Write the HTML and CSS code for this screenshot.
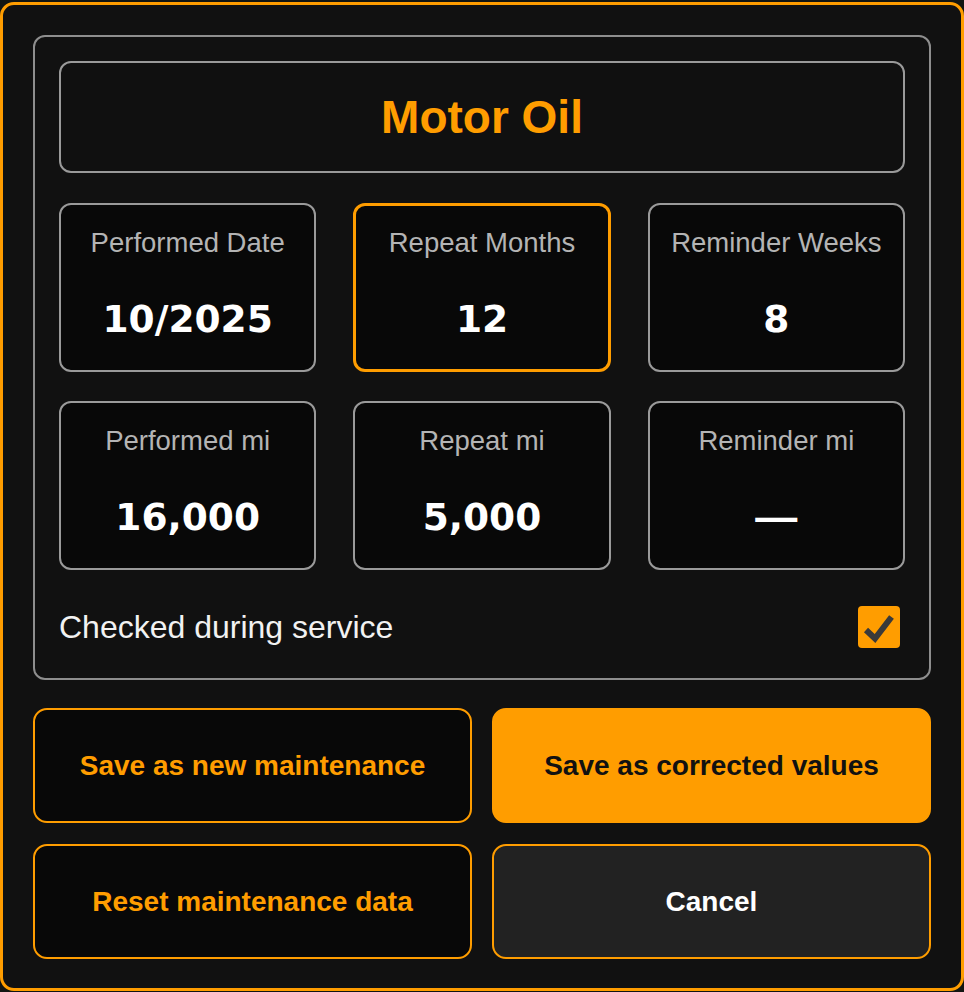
FILE: index.html
```html
<!DOCTYPE html>
<html lang="en">
<head>
<meta charset="utf-8">
<title>Motor Oil</title>
<link rel="stylesheet" href="styles.css">
</head>
<body>
<div class="modal">
  <section class="panel">
    <div class="title-box"><h1 class="title">Motor Oil</h1></div>
    <div class="grid">
      <div class="card"><div class="label">Performed Date</div><div class="value">10/2025</div></div>
      <div class="card active"><div class="label">Repeat Months</div><div class="value">12</div></div>
      <div class="card"><div class="label">Reminder Weeks</div><div class="value">8</div></div>
      <div class="card"><div class="label">Performed mi</div><div class="value">16,000</div></div>
      <div class="card"><div class="label">Repeat mi</div><div class="value">5,000</div></div>
      <div class="card"><div class="label">Reminder mi</div><div class="value value-empty">—</div></div>
    </div>
    <div class="check-row">
      <span class="check-label">Checked during service</span>
      <svg class="checkbox" width="42" height="42" viewBox="0 0 42 42" aria-hidden="true">
        <rect x="0" y="0" width="42" height="42" rx="4" fill="#ff9d00"/>
        <polyline points="8,24 17,32.5 33.5,11" fill="none" stroke="#3a3a3a" stroke-width="6" stroke-linejoin="miter"/>
      </svg>
    </div>
  </section>
  <div class="actions">
    <button class="btn btn-outline">Save as new maintenance</button>
    <button class="btn btn-primary">Save as corrected values</button>
    <button class="btn btn-outline">Reset maintenance data</button>
    <button class="btn btn-cancel">Cancel</button>
  </div>
</div>
</body>
</html>
```

FILE: styles.css
```css
* { box-sizing: border-box; }

html, body {
  margin: 0;
  padding: 0;
  background: #121512;
}

body {
  padding-top: 2px;
  font-family: "Liberation Sans", Arial, sans-serif;
}

.modal {
  width: 964px;
  height: 989px;
  border: 3px solid #ff9d00;
  border-radius: 14px;
  background: #111111;
  padding: 30px 30px 29px;
  display: flex;
  flex-direction: column;
  gap: 28px;
}

.panel {
  border: 2px solid #8e8e8e;
  border-radius: 12px;
  padding: 24px;
  display: flex;
  flex-direction: column;
  gap: 30px;
}

.title-box {
  height: 112px;
  border: 2px solid #9a9a9a;
  border-radius: 12px;
  background: #101010;
  display: flex;
  align-items: center;
  justify-content: center;
}

.title {
  margin: 0;
  color: #ff9d00;
  font-size: 46px;
  font-weight: 700;
  line-height: 1;
}

.grid {
  display: grid;
  grid-template-columns: repeat(3, 1fr);
  grid-auto-rows: 169px;
  column-gap: 37px;
  row-gap: 29px;
}

.card {
  border: 2px solid #9a9a9a;
  border-radius: 12px;
  background: #080808;
  display: flex;
  flex-direction: column;
  align-items: center;
  padding-top: 21px;
}

.card.active {
  border: 3px solid #ff9d00;
  padding-top: 20px;
}

.label {
  color: #b4b4b4;
  font-size: 27.5px;
  line-height: 33px;
  white-space: nowrap;
}

.value {
  margin-top: 36px;
  color: #ffffff;
  font-family: "DejaVu Sans", "Liberation Sans", sans-serif;
  font-size: 37.5px;
  font-weight: 700;
  line-height: 48px;
  white-space: nowrap;
}

.value-empty {
  font-family: "Liberation Sans", Arial, sans-serif;
  font-size: 42px;
}

.check-row {
  height: 54px;
  padding: 6px 5px 6px 0;
  display: flex;
  align-items: center;
  justify-content: space-between;
}

.check-label {
  color: #f2f2f2;
  font-size: 32px;
  line-height: 1.15;
}

.checkbox {
  display: block;
  flex: none;
}

.actions {
  display: grid;
  grid-template-columns: 1fr 1fr;
  grid-auto-rows: 115px;
  column-gap: 20px;
  row-gap: 21px;
}

.btn {
  font-family: "Liberation Sans", Arial, sans-serif;
  font-size: 28px;
  font-weight: 700;
  border: 2px solid #ff9d00;
  border-radius: 14px;
  padding: 0;
  cursor: pointer;
}

.btn-outline {
  background: #080808;
  color: #ff9d00;
}

.btn-primary {
  background: #ff9d00;
  color: #111111;
}

.btn-cancel {
  background: #222222;
  color: #ffffff;
}
```
